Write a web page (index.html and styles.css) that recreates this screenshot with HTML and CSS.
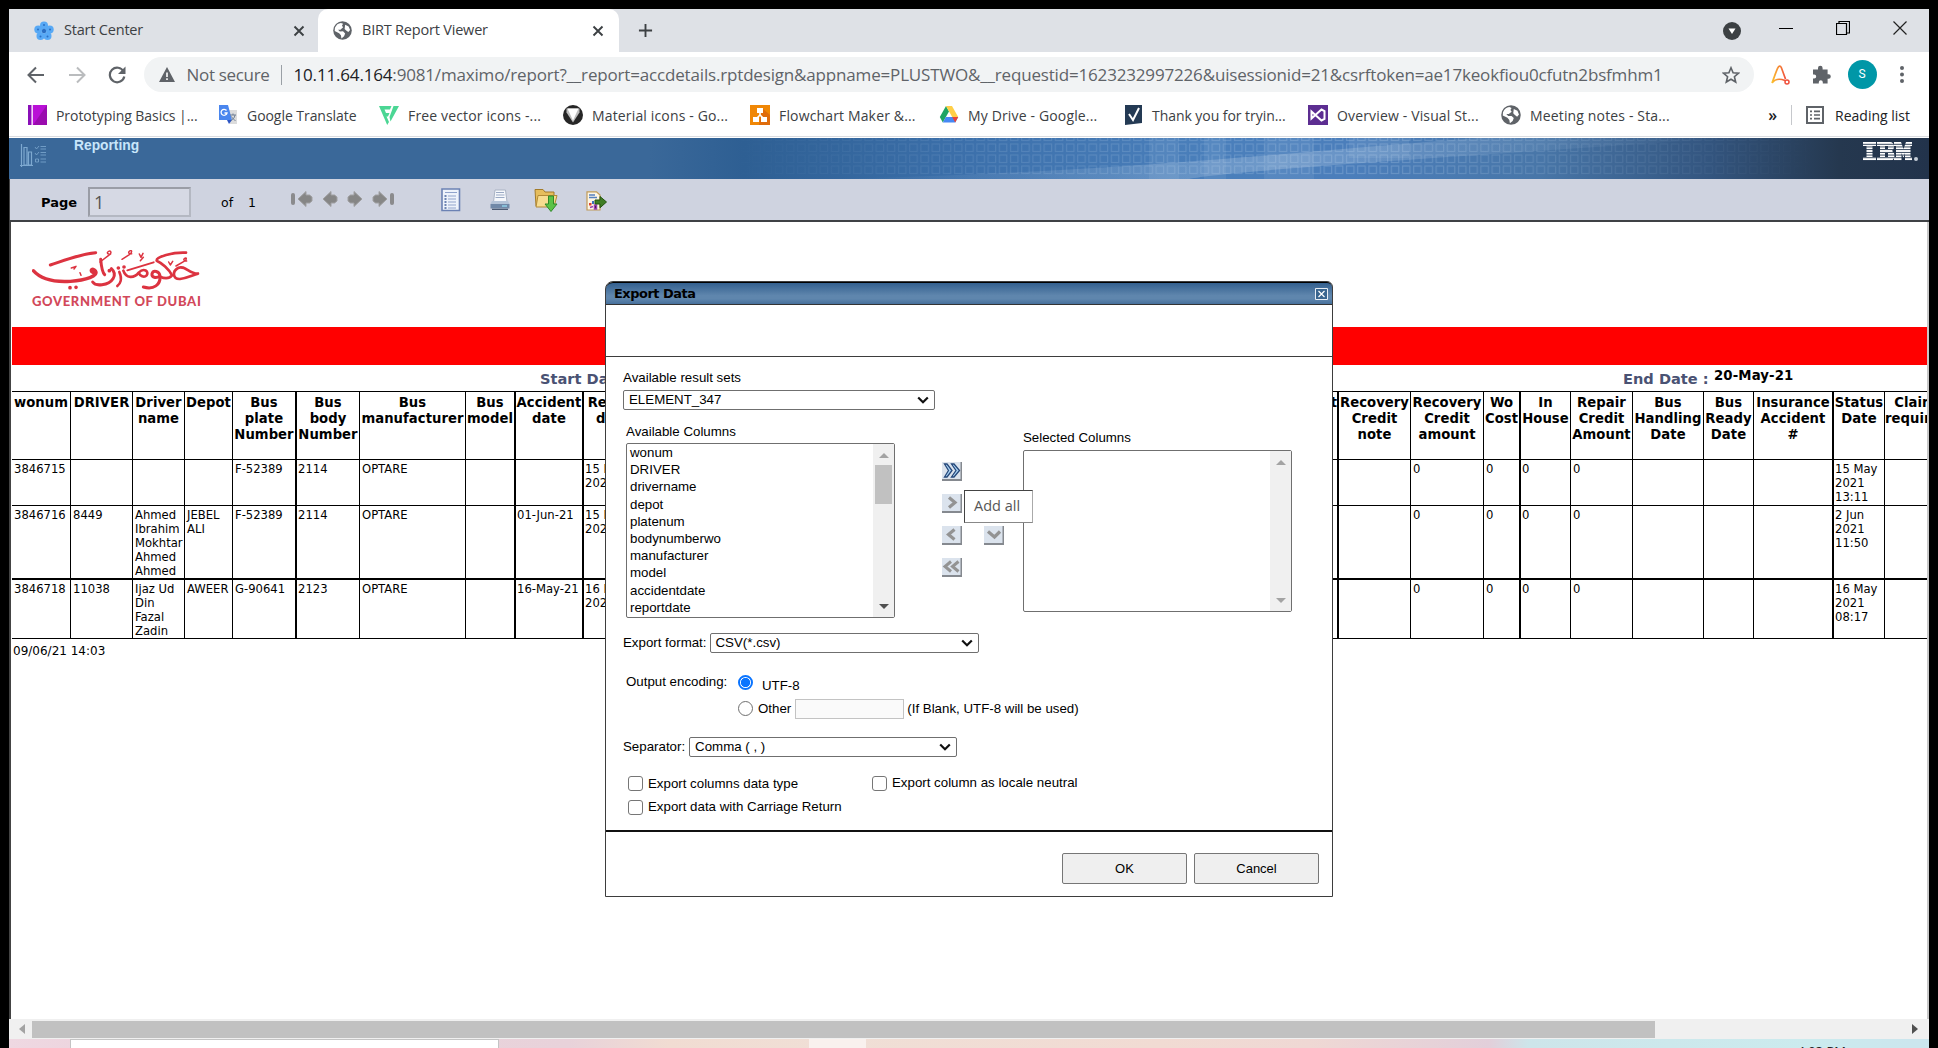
FILE: index.html
```html
<!DOCTYPE html>
<html lang="en">
<head>
<meta charset="utf-8">
<title>BIRT Report Viewer</title>
<link rel="stylesheet" href="styles.css">
</head>
<body>
<svg class="defs" width="0" height="0" aria-hidden="true">
  <defs>
    <symbol id="globe" viewBox="0 0 18 18"><circle cx="9" cy="9" r="8.8" fill="#5f6368"/><path d="M1.800 6.500C3 3.500 5 2 7.500 1.800L9.500 2.600 8.500 4.500 9.600 6 7 8.200H4.800L6.500 10 9.500 9.800 11.500 11.800 10.500 14.500 8 16.500 7.500 13.600 5.800 11.500 1.600 9.500zM11.500 3.500 14.800 5.200 16.200 8.500 14.500 10.500 12.500 9 11 7.500z" fill="#fff"/></symbol>
    <symbol id="cross" viewBox="0 0 12 12"><path d="M1.500 1.500l9 9M10.500 1.500l-9 9" stroke="#3c4043" stroke-width="1.900" fill="none"/></symbol>
    <symbol id="arrow" viewBox="0 0 16 18"><path d="M1 9 9 1.500V5h3.500L15 7v4l-2.500 2H9v3.500z" fill="#868686" stroke="#a0a0a2" stroke-width="1"/></symbol>
    <symbol id="chev" viewBox="0 0 12 8"><path d="M1.200 1.500 6 6.200 10.800 1.500" fill="none" stroke="#111" stroke-width="2.200"/></symbol>
    <symbol id="mvbg" viewBox="0 0 20 19"><path d="M0 0h20v19H0z" fill="#dbe3ed"/><path d="M0 17h20v2H0zM18.500 0H20v19h-1.500z" fill="#85898f"/></symbol>
    <pattern id="cells" width="11.200" height="11" patternUnits="userSpaceOnUse" patternTransform="translate(0 5)"><rect x="1.500" y="1" width="7.500" height="7.500" fill="none" stroke="#cfe2f5" stroke-width="1.200"/></pattern>
    <linearGradient id="fade"><stop offset="0" stop-color="#fff" stop-opacity="0"/><stop offset=".25" stop-color="#fff" stop-opacity=".6"/><stop offset=".6" stop-color="#fff"/><stop offset="1" stop-color="#fff" stop-opacity="0"/></linearGradient>
    <mask id="cellmask"><rect width="1090" height="41" fill="url(#fade)"/></mask>
    <linearGradient id="swoosh"><stop offset="0" stop-color="#b7d0ea" stop-opacity="0"/><stop offset=".5" stop-color="#c3d6ea" stop-opacity=".3"/><stop offset="1" stop-color="#9dbbdc" stop-opacity="0"/></linearGradient>
  </defs>
</svg>

<div class="window">
  <div class="tabstrip">
    <div class="tab">
      <svg class="fav" viewBox="0 0 20 20"><g fill="#58a9f5"><circle cx="10" cy="4.500" r="4"/><circle cx="4.300" cy="8.500" r="4"/><circle cx="15.700" cy="8.500" r="4"/><circle cx="6.500" cy="15" r="4"/><circle cx="13.500" cy="15" r="4"/></g><g fill="#2a6fc4"><circle cx="10" cy="10" r="2.200"/><circle cx="10" cy="4" r="1"/><circle cx="4" cy="8.500" r="1"/><circle cx="16" cy="8.500" r="1"/><circle cx="6.500" cy="15.500" r="1"/><circle cx="13.500" cy="15.500" r="1"/></g></svg>
      <span class="tabname">Start Center</span>
      <svg class="x"><use href="#cross"/></svg>
    </div>
    <div class="tab active">
      <svg class="fav"><use href="#globe"/></svg>
      <span class="tabname">BIRT Report Viewer</span>
      <svg class="x"><use href="#cross"/></svg>
    </div>
    <svg class="plus" viewBox="0 0 16 16"><path d="M8 1v14M1 8h14" stroke="#3c4043" stroke-width="2"/></svg>
    <div class="wincontrols">
      <svg width="18" height="18" viewBox="0 0 18 18"><circle cx="9" cy="9" r="9" fill="#3c4043"/><path d="M5.500 6.500h7L9 12z" fill="#fff"/></svg>
      <svg class="up" width="14" height="14" viewBox="0 0 14 14"><path d="M0 7.500h14" stroke="#000"/></svg>
      <svg class="up" width="14" height="14" viewBox="0 0 14 14"><path d="M.5 2.500h10v11H.5zM3 2V.5h10.500V12H11" fill="none" stroke="#000" stroke-width="1.200"/></svg>
      <svg class="up" width="14" height="14" viewBox="0 0 14 14"><path d="M.5.5l13 13M13.500.5l-13 13" stroke="#222" stroke-width="1.200"/></svg>
    </div>
  </div>

  <div class="navbar">
    <svg class="nav" viewBox="0 0 18 18"><path d="M17 9H2M9 1.500 1.500 9 9 16.500" fill="none" stroke="#5f6368" stroke-width="2"/></svg>
    <svg class="nav" viewBox="0 0 18 18"><path d="M1 9h15M9 1.500 16.500 9 9 16.500" fill="none" stroke="#babcbe" stroke-width="2"/></svg>
    <svg class="nav" viewBox="0 0 18 18"><path d="M15.600 5.500A7.300 7.300 0 1 0 16.300 10.500" fill="none" stroke="#5f6368" stroke-width="2.200"/><path d="M17.500.5v7.500H10z" fill="#5f6368"/></svg>
    <div class="omnibox">
      <svg width="16" height="15" viewBox="0 0 16 15"><path d="M8 0l8 15H0z" fill="#5f6368"/><path d="M7.200 5.500h1.600v4.500H7.200zM7.200 11.300h1.600v1.700H7.200z" fill="#fff"/></svg>
      <span class="unsafe">Not secure</span><i class="bar"></i>
      <span class="url"><b>10.11.64.164</b>:9081/maximo/report?__report=accdetails.rptdesign&amp;appname=PLUSTWO&amp;__requestid=1623232997226&amp;uisessionid=21&amp;csrftoken=ae17keokfiou0cfutn2bsfmhm1</span>
      <svg class="star" width="18" height="18" viewBox="0 0 18 18"><path d="M9 1.800l2.100 5 5.400.4-4.100 3.500 1.300 5.300L9 13.200 4.300 16l1.300-5.300-4.100-3.500 5.400-.4z" fill="none" stroke="#5f6368" stroke-width="1.600"/></svg>
    </div>
    <svg class="ext" width="19" height="20" viewBox="0 0 19 20"><defs><linearGradient id="ag"><stop offset="0" stop-color="#fbc02d"/><stop offset="1" stop-color="#f0503c"/></linearGradient></defs><path d="M1 18C3 13 5.500 5 7 2.500 8 .7 9.500.7 10.300 2.500L14.500 14M1 18c3-4 8-4.500 13-2.500" fill="none" stroke="url(#ag)" stroke-width="1.700"/><circle cx="16" cy="17" r="2" fill="none" stroke="#f0503c" stroke-width="1.500"/></svg>
    <svg class="puz" width="19" height="19" viewBox="0 0 19 19"><path d="M1 4.500h5V3a2.300 2.300 0 0 1 4.600 0v1.500h5v4.800h1a2.200 2.200 0 0 1 0 4.400h-1V18.500h-4.800v-1.200a2 2 0 0 0-4 0v1.200H1v-5h1.200a2 2 0 0 0 0-4H1z" fill="#5f6368"/></svg>
    <span class="avatar">S</span>
    <svg class="dots" width="4" height="17" viewBox="0 0 4 17"><g fill="#5f6368"><circle cx="2" cy="2" r="2"/><circle cx="2" cy="8.500" r="2"/><circle cx="2" cy="15" r="2"/></g></svg>
  </div>

  <div class="bookmarks">
    <div class="bm"><svg viewBox="0 0 20 20"><path d="M1 0h19v20H1z" fill="#b910d6"/><path d="M1 0h3.500v20H1z" fill="#8a0fb8"/><path d="M4.500 0h1.300v20H4.500z" fill="#fff"/><path d="M20 0v20L6 20z" fill="#9a0cae"/></svg><span>Prototyping Basics |...</span></div>
    <div class="bm"><svg viewBox="0 0 20 20"><path d="M8 5h11v14H12z" fill="#dcdcdc"/><path d="M1 0h9l4 15H1z" fill="#4a86ee"/><path d="M9 15h5l-3 4z" fill="#2c55c4"/><path d="M8.500 5.500A3 3 0 1 0 9 8H6.500" fill="none" stroke="#fff" stroke-width="1.300"/><path d="M12 10h6M15 8.500V10M17 10c-.5 3-2 4.500-4 5.500M13.500 11.500c1 2 2.500 3.500 4 4" stroke="#6f7f94" fill="none"/></svg><span>Google Translate</span></div>
    <div class="bm wide"><svg viewBox="0 0 20 20"><path d="M0 1h12.500L11 4.500H5.500L7 8h3.500L9 11.500H7.500L10 17l-1.800 3zM14.500 1H20L11.500 16.500 10.500 12z" fill="#4bd694"/></svg><span>Free vector icons -...</span></div>
    <div class="bm wide"><svg viewBox="0 0 20 20"><circle cx="10" cy="10" r="10" fill="#262626"/><path d="M3.500 3.500h13v4L10 17.500 3.500 7.500z" fill="#bdbdbd"/><path d="M4.500 3.500h11L10 15.500z" fill="#fff"/></svg><span>Material icons - Go...</span></div>
    <div class="bm wide"><svg viewBox="0 0 20 20"><path d="M0 0h20v20H0z" fill="#f08705"/><path d="M12 3l8 7v10H9z" fill="#df6c0c"/><path d="M10 5v5L6 14M10 10l4 4" stroke="#fff" stroke-width="1.600" fill="none"/><path d="M7 3h6v5H7zM3 12h6v5H3zM11 12h6v5h-6z" fill="#fff"/></svg><span>Flowchart Maker &amp;...</span></div>
    <div class="bm wide"><svg viewBox="0 0 20 20"><path d="M7 1 .8 12l3 5.500L10 6.500z" fill="#1fa463"/><path d="M7 1h6l6.200 11h-6z" fill="#ffcf48"/><path d="M3.800 17.500 6.800 12h12.400l-3 5.500z" fill="#4688f4"/><path d="M13.200 12h6l-3 5.500z" fill="#ea4335"/></svg><span>My Drive - Google...</span></div>
    <div class="bm"><svg viewBox="0 0 20 20"><path d="M2 0h17v18L2 20z" fill="#243a54"/><path d="M6 9l4 6 6-12" fill="none" stroke="#fff" stroke-width="2"/></svg><span>Thank you for tryin...</span></div>
    <div class="bm wide"><svg viewBox="0 0 20 20"><path d="M0 0h20v20H0z" fill="#5c2d91"/><path d="M3.500 6.500v7L13.500 4.500 16.500 6v8l-3 1.500z" fill="none" stroke="#fff" stroke-width="2"/></svg><span>Overview - Visual St...</span></div>
    <div class="bm wide"><svg><use href="#globe"/></svg><span>Meeting notes - Sta...</span></div>
    <div class="reading"><span class="more">»</span><i class="bar"></i>
      <svg width="18" height="18" viewBox="0 0 18 18"><path d="M1 1h16v16H1z" fill="none" stroke="#5f6368" stroke-width="2"/><path d="M4 5.300h2M8 5.300h6M4 9h2M8 9h6M4 12.700h2M8 12.700h6" stroke="#5f6368" stroke-width="1.700"/></svg><span>Reading list</span></div>
  </div>

  <div class="banner">
    <svg class="art" width="1090" height="41" viewBox="0 0 1090 41"><path d="M100 41C400 34 560 14 750 0H1000C800 14 500 32 460 41z" fill="url(#swoosh)"/><g fill="#c5d8ec" opacity=".1"><path d="M420 0h30v41h-30zM475 0h22v41h-22zM535 0h50v41h-50zM620 0h60v20h-60z"/></g><rect width="1090" height="37" fill="url(#cells)" mask="url(#cellmask)" opacity=".22"/></svg>
    <svg class="brand" width="27" height="23" viewBox="0 0 27 23" fill="none" stroke="#7ea9d0"><path d="M0 21.500h13M1.500 0v23M4 3.500h3V21H4zM8.500 8h3v13h-3z" stroke-width="1.200"/><path d="M15 3l1.500 2L19 2M15 9l1.500 2L19 8M15.500 15h3v3h-3zM20.500 2.500H26M20.500 5H26M20.500 8.500H26M20.500 11H26M20.500 15H26M20.500 18H26" opacity=".8"/></svg>
    <span class="bannertitle">Reporting</span>
    <svg class="ibm" width="56" height="20" viewBox="0 0 56 20"><defs><pattern id="st" width="60" height="2.700" patternUnits="userSpaceOnUse"><path d="M0 0h60v1.700H0z" fill="#fff"/></pattern></defs><path d="M0 0h13v4H9.500v11H13v4H0v-4h3.500V4H0zM14 0h13c5 0 5 7 2 9 4 2 3 10-2 10H14v-4h3V4h-3zm8 4v3h3V4zm0 7v4h3v-4zM31 0h7l2.500 7L43 0h6v4h-1.500v11H49v4h-7v-8l-1.500 5-2-5v8H31v-4h2V4h-2z" fill="url(#st)" fill-rule="evenodd"/><circle cx="53" cy="17" r="2" fill="#c6ced8"/></svg>
  </div>

  <div class="toolbar">
    <b class="pg">Page</b><span class="pagebox">1</span><span class="of">of</span><span class="tot">1</span>
    <div class="arrows">
      <span><i></i><svg><use href="#arrow"/></svg></span><svg><use href="#arrow"/></svg><svg class="flip"><use href="#arrow"/></svg><span class="flip"><i></i><svg><use href="#arrow"/></svg></span>
    </div>
    <div class="tools">
      <svg width="20" height="24" viewBox="0 0 20 24"><path d="M1 1h17.500v21.500H1z" fill="#eef3fb" stroke="#6c82b4" stroke-width="1.600"/><path d="M4 4.500h12M7 8h8M7 11h8M7 14h8M7 17h8M7 20h8" stroke="#8fa3cc" stroke-width="1.200"/><path d="M3.500 8h2M3.500 11h2M3.500 14h2M3.500 17h2M3.500 20h2" stroke="#44629c" stroke-width="1.300"/></svg>
      <svg width="20" height="22" viewBox="0 0 20 22"><path d="M5 1h10.500l1.500 12H3.500z" fill="#f6f8fc" stroke="#aab3c4"/><path d="M6 3.500h8M6 6h8.500M5.500 8.500h9" stroke="#9aa9c4"/><path d="M2 12h16l1.500 3H.5z" fill="#b5c4d8"/><path d="M.5 15h19v4.500H.5z" fill="#7189a8"/><path d="M2 20.300h16" stroke="#2c3e58"/><path d="M12 17h5" stroke="#8fd0e8" stroke-width="1.500"/></svg>
      <svg class="fold" width="25" height="24" viewBox="0 0 25 24"><path d="M1 1.500h8l2 2.500h9v14H2z" fill="#e6bd5c" stroke="#a37b2a"/><path d="M4 7.500h19L20 19H2z" fill="#f7dc90" stroke="#b38a36"/><path d="M14.500 8h5v8H23l-6 7.500L11 16h3.500z" fill="#5cc247" stroke="#2f8a28"/></svg>
      <svg class="exp" width="21" height="20" viewBox="0 0 21 20"><path d="M1 .8h9.500L14 4v15H1z" fill="#fdf6e6" stroke="#c09a58" stroke-width="1.200"/><path d="M3 4h6M3 6.500h8" stroke="#5580c0" stroke-width="1.500"/><path d="M3 12h2.500v2.500H3z" fill="#e0452f"/><path d="M6 10h2v3H6z" fill="#3d6fc0"/><path d="M4 16.500l3-1M8.500 14h2v4h-2z" stroke="#9a3fb0" stroke-width="1.500"/><path d="M9 9h5V5.500L20.500 11 14 16.800V13H9z" fill="#3f7d24" stroke="#25540f"/></svg>
    </div>
  </div>

  <div class="report">
    <div class="logo">
      <svg width="171" height="46" viewBox="30 30 513 138" fill="none" stroke="#dc3340" stroke-linecap="round" stroke-linejoin="round">
        <path d="M34 92C55 116 95 127 145 124 190 121 232 108 220 92 212 82 202 92 212 97" stroke-width="10"/>
        <path d="M85 75C130 60 175 42 221 38" stroke-width="9"/>
        <path d="M236 58C238 80 240 96 248 104M268 86C288 104 272 130 240 134 226 136 216 132 212 126" stroke-width="9"/>
        <path d="M292 96C302 118 294 132 286 138M304 92C312 116 336 116 350 98 366 82 382 94 374 106 366 114 354 108 350 98" stroke-width="8"/>
        <path d="M316 91 395 67" stroke-width="6"/>
        <path d="M414 108C402 116 388 112 390 101 394 89 412 93 414 108 416 134 396 150 364 141" stroke-width="9"/>
        <path d="M492 38C452 36 402 50 404 62 418 68 442 88 450 106 442 116 428 116 414 110" stroke-width="8"/>
        <path d="M528 101C502 102 488 74 468 84 450 94 452 118 474 117 496 114 510 106 528 101" stroke-width="8"/>
        <path d="M234 66 260 46c10-5 8-16 0-12s-2 11 6 8M300 58 322 44c10-6 8-16 1-11s0 10 6 8M352 42l5 10 6-12M355 62l9-10M440 66l5 9 7-11M462 78l24-14c10-5 8-13 2-9s0 9 6 8M148 84l14-5-6 8M174 98l3 8" stroke-width="4.500"/>
        <path d="M144 143h.1M162 142h.1M262 92h.1M289 84h.1M306 81h.1" stroke-width="11"/>
      </svg>
      <span class="gov">GOVERNMENT OF DUBAI</span>
    </div>
    <div class="red"></div>
    <div class="dates"><span class="lbl start">Start Date :</span><span class="lbl end">End Date :</span><b class="endval">20-May-21</b></div>
    <table class="grid">
      <colgroup><col class="w58"><col class="w62"><col class="w52"><col class="w48"><col class="w63"><col class="w64"><col class="w106"><col class="w49"><col class="w68"><col class="w60"><col><col class="w73"><col class="w73"><col class="w36"><col class="w51"><col class="w62"><col class="w71"><col class="w50"><col class="w79"><col class="w52"><col class="w44"></colgroup>
      <thead><tr class="h"><th>wonum</th><th>DRIVER</th><th>Driver name</th><th>Depot</th><th>Bus plate Number</th><th class="k">Bus body Number</th><th>Bus manufacturer</th><th>Bus model</th><th class="k">Accident date</th><th class="k">Report date</th><th class="r">Cost</th><th class="k">Recovery Credit note</th><th>Recovery Credit amount</th><th>Wo Cost</th><th class="k">In House</th><th>Repair Credit Amount</th><th>Bus Handling Date</th><th>Bus Ready Date</th><th>Insurance Accident #</th><th class="k">Status Date</th><th><span class="cut">Claim<br>required</span></th></tr></thead>
      <tbody>
      <tr class="r1"><td>3846715</td><td></td><td></td><td></td><td>F-52389</td><td class="k">2114</td><td>OPTARE</td><td></td><td class="k"></td><td class="k">15 May<br>2021</td><td></td><td class="k"></td><td>0</td><td>0</td><td class="k">0</td><td>0</td><td></td><td></td><td></td><td class="k">15 May<br>2021<br>13:11</td><td></td></tr>
      <tr class="r2"><td>3846716</td><td>8449</td><td>Ahmed<br>Ibrahim<br>Mokhtar<br>Ahmed<br>Ahmed</td><td>JEBEL<br>ALI</td><td>F-52389</td><td class="k">2114</td><td>OPTARE</td><td></td><td class="k">01-Jun-21</td><td class="k">15 May<br>2021</td><td></td><td class="k"></td><td>0</td><td>0</td><td class="k">0</td><td>0</td><td></td><td></td><td></td><td class="k">2 Jun<br>2021<br>11:50</td><td></td></tr>
      <tr class="r3"><td>3846718</td><td>11038</td><td>Ijaz Ud<br>Din<br>Fazal<br>Zadin</td><td>AWEER</td><td>G-90641</td><td class="k">2123</td><td>OPTARE</td><td></td><td class="k">16-May-21</td><td class="k">16 May<br>2021</td><td></td><td class="k"></td><td>0</td><td>0</td><td class="k">0</td><td>0</td><td></td><td></td><td></td><td class="k">16 May<br>2021<br>08:17</td><td></td></tr>
      </tbody>
    </table>
    <div class="stamp">09/06/21 14:03</div>
  </div>

  <div class="hscroll"><svg width="6" height="10" viewBox="0 0 6 10"><path d="M6 0v10L0 5z" fill="#a3a3a3"/></svg><div class="thumb"></div><svg class="right" width="6" height="10" viewBox="0 0 6 10"><path d="M0 0v10l6-5z" fill="#505050"/></svg></div>
  <div class="taskbar"><div class="search"></div><div class="tview"></div><div class="clock">4:03 PM</div></div>
</div>

<div class="dialog">
  <div class="title"><b>Export Data</b><svg width="13" height="12" viewBox="0 0 13 12"><path d="M.5.5h12v11H.5z" fill="#39658f" stroke="#e8eef5"/><path d="M3.500 3l6 6M9.500 3l-6 6" stroke="#fff" stroke-width="1.200"/></svg></div>
  <div class="blank"></div>
  <div class="body">
    <div class="rs">Available result sets</div>
    <div class="select s1"><span>ELEMENT_347</span><svg><use href="#chev"/></svg></div>
    <div class="cols">
      <div class="avail">
        <div class="cap">Available Columns</div>
        <div class="list"><ul><li>wonum</li><li>DRIVER</li><li>drivername</li><li>depot</li><li>platenum</li><li>bodynumberwo</li><li>manufacturer</li><li>model</li><li>accidentdate</li><li>reportdate</li></ul>
          <div class="vs"><svg viewBox="0 0 10 5"><path d="M0 5h10L5 0z" fill="#a3a3a3"/></svg><i></i><svg class="dn" viewBox="0 0 10 5"><path d="M0 0h10L5 5z" fill="#505050"/></svg></div></div>
      </div>
      <div class="moves">
        <svg viewBox="0 0 20 19"><use href="#mvbg"/><path d="M2.500 2h2.500l5 6.500-5 6.500H2.500L6.500 8.500zM9.500 2H12l5.500 6.500L12 15H9.500l4.500-6.500z" fill="#a9d3f5" stroke="#26487a" stroke-width="1.300"/></svg>
        <svg viewBox="0 0 20 19"><use href="#mvbg"/><path d="M7 3.500l6 5-6 5" fill="none" stroke="#939393" stroke-width="3.200"/></svg>
        <div class="pair"><svg viewBox="0 0 20 19"><use href="#mvbg"/><path d="M12.500 3.500l-6 5 6 5" fill="none" stroke="#939393" stroke-width="3.200"/></svg><svg viewBox="0 0 20 19"><use href="#mvbg"/><path d="M4 5.500l6.500 5.500L16 5.500" fill="none" stroke="#939393" stroke-width="3.200"/></svg></div>
        <svg viewBox="0 0 20 19"><use href="#mvbg"/><path d="M9 3.500l-6 5 6 5M16.500 3.500l-6 5 6 5" fill="none" stroke="#939393" stroke-width="3"/></svg>
      </div>
      <div class="sel">
        <div class="cap">Selected Columns</div>
        <div class="list"><ul></ul><div class="vs"><svg viewBox="0 0 10 5"><path d="M0 5h10L5 0z" fill="#a3a3a3"/></svg><svg class="dn" viewBox="0 0 10 5"><path d="M0 0h10L5 5z" fill="#a3a3a3"/></svg></div></div>
      </div>
    </div>
    <div class="row format"><span>Export format:</span><div class="select s2"><span>CSV(*.csv)</span><svg><use href="#chev"/></svg></div></div>
    <div class="row enc"><span class="l">Output encoding:</span><i class="radio on"></i><span class="utf">UTF-8</span></div>
    <div class="row other"><i class="radio"></i><span>Other</span><i class="input"></i><span>(If Blank, UTF-8 will be used)</span></div>
    <div class="row sep"><span>Separator:</span><div class="select s3"><span>Comma ( , )</span><svg><use href="#chev"/></svg></div></div>
    <div class="row c1"><i class="check"></i><span class="first">Export columns data type</span><i class="check"></i><span>Export column as locale neutral</span></div>
    <div class="row c2"><i class="check"></i><span>Export data with Carriage Return</span></div>
  </div>
  <div class="foot"><div class="btn">OK</div><div class="btn">Cancel</div></div>
  <div class="tip">Add all</div>
</div>
</body>
</html>
```
FILE: styles.css
```css
*{box-sizing:border-box}
body{margin:0;background:#000;width:1938px;height:1048px;overflow:hidden;position:relative;font-family:"Open Sans","Noto Sans",sans-serif;color:#3c4043}
svg{display:block;flex:none}
i{display:block;flex:none}
.defs{position:absolute}
.window{margin:9px 9px 0 9px;width:1920px;height:1039px;background:#fff;display:flex;flex-direction:column;overflow:hidden}
.window>div{flex:none}

/* tab strip */
.tabstrip{height:43px;background:#dee1e6;display:flex;align-items:center;font-size:14.500px;letter-spacing:-.2px}
.tab{display:flex;align-items:center;height:43px;width:309px;padding-left:25px}
.tab.active{width:301px;padding-left:15px;background:#fff;border-radius:10px 10px 0 0}
.tab .fav{width:20px;height:20px}
.tab.active .fav{width:19px;height:19px}
.tabname{margin-left:10px;flex:1;white-space:nowrap;padding-bottom:2px}
.x{width:12px;height:12px;margin-right:13px}
.tab.active .x{margin-right:15px}
.plus{width:15px;height:15px;margin-left:19px}
.wincontrols{margin-left:auto;display:flex;align-items:center;gap:43px;padding-right:22px}
.wincontrols svg:first-child{margin-right:-5px}
.up{margin-top:-6px}

/* navigation */
.navbar{height:45px;display:flex;align-items:center;padding-left:18px}
.nav{width:18px;height:18px;margin-right:22.500px}
.omnibox{margin-left:-5px;width:1610px;height:35px;background:#f1f3f4;border-radius:18px;display:flex;align-items:center;padding:0 14px 0 15px;font-size:17px;color:#5f6368}
.unsafe{margin-left:12px;letter-spacing:-.32px;width:94px}
.bar{width:1px;height:20px;background:#9aa0a6}
.url{margin-left:12px;white-space:nowrap;letter-spacing:-.17px;flex:1}
.url b{font-weight:400;color:#202124}
.ext{margin-left:17px}
.puz{margin-left:22px}
.avatar{margin-left:17px;width:29px;height:29px;border-radius:50%;background:#0097a7;color:#fff;font:12px/29px Roboto,sans-serif;text-align:center}
.dots{margin-left:23px}

/* bookmarks */
.bookmarks{height:40px;padding:0 19px 3px 18px;display:grid;grid-template-columns:191px 161px 184px 187px 189px 184px 185px 193px 200px 1fr;font-size:14px;align-items:center;border-bottom:1px solid #dadce0}
.bm,.reading{display:flex;align-items:center;white-space:nowrap}
.bm svg{width:20px;height:20px;margin-right:9px}
.bm{letter-spacing:-.05px}
.wide{letter-spacing:.15px}
.reading{justify-content:flex-end;letter-spacing:0;color:#202124}
.reading .more{margin-right:14px;font-size:16px;font-weight:600}
.reading .bar{margin-right:14px;background:#c6c8cc}
.reading svg{margin-right:11px}

/* product banner */
.banner{margin-top:1px;height:41px;position:relative;display:flex;background:linear-gradient(90deg,#3a6899 0,#3a6899 640px,#2e5f93 735px,#3c70ab 960px,#4a7fbb 1200px,#4b7ebb 1340px,#4876a8 1530px,#33557f 1700px,#25384f 1830px,#22334b 1920px)}
.art{position:absolute;left:720px;top:0}
.brand{margin:6px 0 0 11px}
.bannertitle{margin:0 0 0 27px;font:bold 13.800px/16px "Liberation Sans",sans-serif;color:#c8e6fb}
.ibm{margin:4px 10px 0 auto}

/* report toolbar */
.toolbar{height:43px;background:#cfd3e0;border-bottom:2px solid #3f4145;border-left:1px solid #444;display:flex;align-items:center;font:12.500px "DejaVu Sans",sans-serif;color:#000}
.pg{font-size:13px;margin-left:31px;width:47px;padding-top:5px}
.pagebox{width:103px;height:30px;margin-top:4px;border:2px solid;border-color:#9a9da6 #b4b8c2 #b4b8c2 #9a9da6;background:#d6d9e4;color:#555;font:18px/26px "Open Sans",sans-serif;padding-left:4px}
.of{margin-left:30px;padding-top:5px;width:27px}
.tot{padding-top:5px;width:43px}
.arrows{display:flex;align-items:center;width:150px;gap:9px;padding-bottom:1px}
.arrows svg{width:16px;height:18px}
.arrows span{display:flex;align-items:center;gap:2px}
.arrows span i{width:4px;height:12px;border-radius:2px;background:#8b8b8d}
.flip{transform:scaleX(-1)}
.tools{display:flex;align-items:center;gap:29px}
.fold{margin-left:-5px}
.exp{margin:2px 0 0 -2px}

/* report */
.report{height:797px;border-left:2px solid #444;border-right:2px solid #c8c8c8;padding-left:1px;color:#000;overflow:hidden;font-family:"DejaVu Sans",sans-serif}
.logo{height:105px;padding:28px 0 0 20px}
.gov{display:block;margin-top:-3px;font:900 13px/16px Lato,sans-serif;letter-spacing:.66px;color:#d2485a;white-space:nowrap}
.red{height:38px;background:#f00}
.dates{height:26px;display:flex;font-weight:bold}
.lbl{color:#4a5273;font-size:14.600px;line-height:28px;white-space:nowrap}
.start{margin-left:528px;width:1083px}
.end{width:91px}
.endval{font-size:13.300px;line-height:21px;letter-spacing:.1px}
.grid{width:1916px;table-layout:fixed;border-collapse:separate;border-spacing:0}
.w36{width:36px}.w44{width:44px}.w48{width:48px}.w49{width:49px}.w50{width:50px}.w51{width:51px}.w52{width:52px}.w58{width:58px}.w60{width:60px}.w62{width:62px}.w63{width:63px}.w64{width:64px}.w68{width:68px}.w71{width:71px}.w73{width:73px}.w79{width:79px}.w106{width:106px}
th,td{vertical-align:top;border-left:1px solid #000;border-bottom:1px solid #000;padding:2px 1px 0 2px;text-align:left;font-size:11.600px;line-height:14px;white-space:nowrap}
th{border-top:1px solid #000;text-align:center;font-size:13.200px;line-height:16px;padding:3px 0 0 0;white-space:normal;letter-spacing:.05px}
th:first-child,td:first-child{border-left:0}
td.k{padding-left:1px}
.k{border-left-width:2px}
th.r{text-align:right}
.cut{display:block;width:60px}
.h{height:69px}.r1{height:46px}.r2{height:74px}.r3{height:59px}
.r2 td{border-bottom-width:2px}
.stamp{font-size:12px;line-height:14px;margin:5px 0 0 1px}

/* bottom scrollbar and taskbar */
.hscroll{height:20px;background:#f0f0f0;display:flex;align-items:center;padding:0 11px 0 10px}
.thumb{width:1623px;height:17px;background:#c1c1c1;margin-left:7px}
.right{margin-left:auto}
.taskbar{height:9px;overflow:hidden;position:relative;display:flex;background:linear-gradient(90deg,#efd8e2 0,#ecd4dd 100px,#e8d2da 560px,#f1dcd2 660px,#f0dfd6 820px,#f1dbd3 1150px,#efd8d4 1300px,#e2cfda 1480px,#cde5ea 1520px,#cbebee 1800px,#cbe6ee 1900px)}
.search{width:429px;height:12px;margin-left:61px;background:#fff;border:1px solid #c4c4c4}
.tview{margin-left:310px;width:57px;background:#f9f1ee}
.clock{margin-left:auto;padding-right:83px;padding-top:3px;font-size:13px;line-height:18px;color:#222}

/* export dialog */
.dialog{position:absolute;left:605px;top:281px;width:728px;height:616px;background:#fff;border:1px solid #3d3d3d;border-radius:8px 6px 0 0;color:#000;font:13.300px/16px "Liberation Sans",Arial,sans-serif;display:flex;flex-direction:column}
.title{height:23px;border-top:1px solid #000;border-bottom:1px solid #333;border-radius:7px 5px 0 0;background:linear-gradient(#33608f,#5f86ad 60%,#5f86ad 75%,#46709c);display:flex;align-items:center;justify-content:space-between;padding:0 4px 0 8px;font:12.900px "DejaVu Sans",sans-serif}
.title b{letter-spacing:-.45px}
.blank{height:52px;border-bottom:1px solid #3d3d3d}
.body{height:475px;border-bottom:2px solid #111;padding-left:17px}
.rs{margin-top:13px}
.select{height:20px;border:1px solid #6f6f6f;border-radius:2px;display:flex;align-items:center;justify-content:space-between;padding:0 5px}
.select svg{width:12px;height:8px}
.s1{width:312px;margin-top:4px}
.cols{display:flex;height:208px;padding-left:3px}
.avail{width:268px;padding-top:14px}
.list{border:1px solid #6f6f6f;border-radius:2px;display:flex;margin-top:3px;width:269px;height:175px}
.list ul{flex:1;margin:0;padding:0 0 0 3px;list-style:none;line-height:17.200px}
.vs{width:21px;background:#f0f0f0;display:flex;flex-direction:column;align-items:center;padding:9px 0 8px}
.vs svg{width:10px;height:5px}
.vs i{width:17px;height:39px;background:#c1c1c1;margin-top:7px}
.vs .dn{margin-top:auto}
.moves{width:129px;padding:52px 0 0 48px;display:flex;flex-direction:column;gap:13px}
.moves svg{width:20px;height:19px}
.pair{display:flex;gap:22px}
.sel{padding-top:20px}
.sel .list{margin-top:4px;height:162px}
.row{display:flex;align-items:center;white-space:nowrap}
.format{margin-top:15px}
.s2{width:269px;margin-left:3px}
.enc{margin:19px 0 0 3px;height:20px}
.enc .l{width:112px}
.radio{width:15px;height:15px;border:1px solid #6f6f6f;border-radius:50%}
.radio.on{border:2px solid #0a74ff;background:radial-gradient(circle,#0a74ff 0 4.300px,#fff 5px)}
.utf{margin:7px 0 0 9px}
.other{margin:6px 0 0 115px;height:21px}
.other span{margin-left:5px}
.input{width:109px;height:20px;border:1px solid #c3c3c3;background:#fafafa;margin-left:4px}
.other .input+span{margin-left:3px}
.sep{margin-top:18px}
.s3{width:268px;margin-left:4px}
.c1{margin:18px 0 0 5px;height:16px}
.check{width:15px;height:15px;border:1px solid #767676;border-radius:3px}
.check+span{margin-left:5px}
.c1 .first{width:224px;padding-top:1px}
.c2{margin:8px 0 0 5px;height:16px}
.foot{display:flex;gap:7px;justify-content:flex-end;padding:21px 13px 0 0}
.btn{width:125px;height:31px;border:1px solid #767676;border-radius:2px;background:#efefef;text-align:center;line-height:29px;font-size:13px}
.tip{position:absolute;left:358px;top:208px;width:69px;height:33px;background:#fff;border:1px solid #444;border-right-color:#aaa;border-bottom-color:#888;padding-left:9px;font:14.500px/30px "Open Sans",sans-serif;color:#575757}
```
